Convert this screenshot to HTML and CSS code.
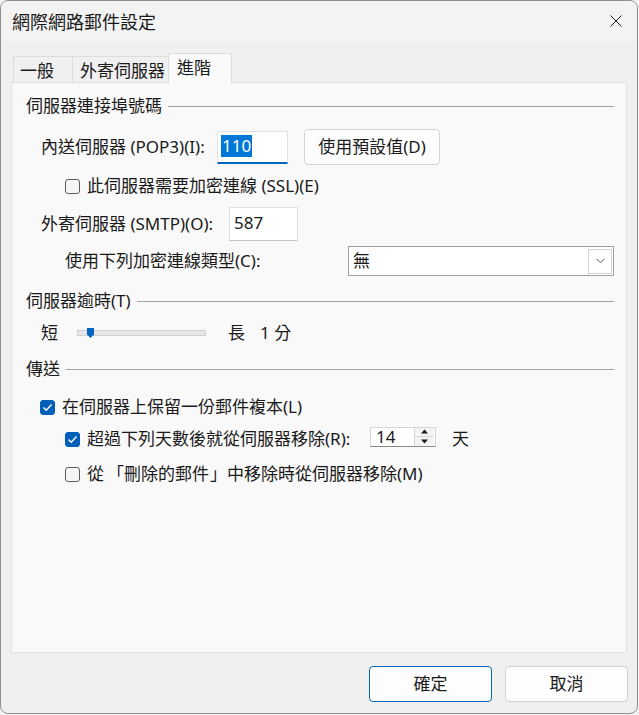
FILE: index.html
```html
<!DOCTYPE html>
<html lang="zh-Hant">
<head>
<meta charset="utf-8">
<title>網際網路郵件設定</title>
<link rel="stylesheet" href="styles.css">
</head>
<body>
<div class="window">
  <div class="titlebar">
    <span class="title">網際網路郵件設定</span>
    <span class="close" aria-label="關閉">
      <svg width="12" height="12" viewBox="0 0 12 12"><path d="M0.5 0.5 L11.5 11.5 M11.5 0.5 L0.5 11.5" stroke="#1a1a1a" stroke-width="1" fill="none"/></svg>
    </span>
  </div>
  <div class="content">
    <div class="tabs">
      <div class="tab tab-general">一般</div>
      <div class="tab tab-outgoing">外寄伺服器</div>
      <div class="tab tab-active">進階</div>
    </div>
    <div class="panel">
      <div class="group-header h-ports"><span>伺服器連接埠號碼</span><span class="rule"></span></div>

      <div class="row row-pop">
        <span class="label lbl-pop">內送伺服器 (POP3)(I):</span>
        <div class="textbox tb-pop"><span class="sel">110</span></div>
        <button class="btn btn-default">使用預設值(D)</button>
      </div>

      <div class="row row-ssl">
        <span class="checkbox"></span>
        <span class="check-label">此伺服器需要加密連線 (SSL)(E)</span>
      </div>

      <div class="row row-smtp">
        <span class="label lbl-smtp">外寄伺服器 (SMTP)(O):</span>
        <div class="textbox tb-smtp">587</div>
      </div>

      <div class="row row-enc">
        <span class="label lbl-enc">使用下列加密連線類型(C):</span>
        <div class="select">
          <span class="select-value">無</span>
          <span class="select-btn">
            <svg width="9" height="6" viewBox="0 0 9 6"><path d="M0.5 0.8 L4.5 4.8 L8.5 0.8" stroke="#5a5a5a" stroke-width="1" fill="none"/></svg>
          </span>
        </div>
      </div>

      <div class="group-header h-timeout"><span>伺服器逾時(T)</span><span class="rule"></span></div>

      <div class="row row-slider">
        <span class="slider-short">短</span>
        <div class="track">
          <svg class="thumb" width="7" height="10" viewBox="0 0 7 10"><path d="M0 0 H7 V6.5 L3.5 10 L0 6.5 Z" fill="#0067c0"/></svg>
        </div>
        <span class="slider-long">長</span>
        <span class="slider-value">1 分</span>
      </div>

      <div class="group-header h-send"><span>傳送</span><span class="rule"></span></div>

      <div class="row row-keep">
        <span class="checkbox checked"><svg width="11" height="9" viewBox="0 0 11 9"><path d="M1.5 4.6 L4.2 7.2 L9.6 1.6" stroke="#fff" stroke-width="1.4" fill="none"/></svg></span>
        <span class="check-label">在伺服器上保留一份郵件複本(L)</span>
      </div>

      <div class="row row-remove">
        <span class="checkbox checked"><svg width="11" height="9" viewBox="0 0 11 9"><path d="M1.5 4.6 L4.2 7.2 L9.6 1.6" stroke="#fff" stroke-width="1.4" fill="none"/></svg></span>
        <span class="check-label lbl-days">超過下列天數後就從伺服器移除(R):</span>
        <div class="spinner">
          <span class="spin-value">14</span>
          <span class="spin-btns">
            <span class="spin-btn"><svg width="7" height="5" viewBox="0 0 7 5"><path d="M3.5 0.5 L7 4.5 H0 Z" fill="#1a1a1a"/></svg></span>
            <span class="spin-btn"><svg width="7" height="5" viewBox="0 0 7 5"><path d="M0 0.5 H7 L3.5 4.5 Z" fill="#1a1a1a"/></svg></span>
          </span>
        </div>
        <span class="days-unit">天</span>
      </div>

      <div class="row row-deleted">
        <span class="checkbox"></span>
        <span class="check-label">從<span class="bracket-open">「</span>刪除的郵件<span class="bracket-close">」</span>中移除時從伺服器移除(M)</span>
      </div>
    </div>

    <div class="footer">
      <button class="btn btn-dialog btn-ok">確定</button>
      <button class="btn btn-dialog">取消</button>
    </div>
  </div>
</div>
</body>
</html>
```

FILE: styles.css
```css
* { box-sizing: border-box; }

html, body {
  margin: 0;
  padding: 0;
  background: #f3f3f3;
}

body {
  font-family: "Noto Sans", "Noto Sans CJK TC", sans-serif;
  font-size: 17px;
  color: #1a1a1a;
}

.window {
  width: 638px;
  height: 714px;
  border: 1px solid #8f8f8f;
  border-radius: 8px;
  background: #f0f0f0;
  overflow: hidden;
  display: flex;
  flex-direction: column;
}

.titlebar {
  height: 40px;
  flex: 0 0 40px;
  background: #f3f3f3;
  display: flex;
  align-items: center;
  justify-content: space-between;
  padding: 0 15px 0 11px;
}

.title {
  font-family: "Noto Sans CJK TC", sans-serif;
  font-size: 18px;
  line-height: 24px;
  color: #1a1a1a;
}

.close {
  display: flex;
  width: 12px;
  height: 12px;
}

.content {
  flex: 1;
  display: flex;
  flex-direction: column;
  padding: 12px 10px 0 10px;
}

/* Tabs */
.tabs {
  display: flex;
  align-items: flex-end;
  height: 29px;
  padding-left: 2px;
}

.tab {
  height: 26px;
  border: 1px solid #dcdcdc;
  border-bottom: none;
  background: #f0f0f0;
  display: flex;
  align-items: center;
  padding: 0 0 0 6px;
  line-height: 22px;
  white-space: nowrap;
  font-family: "Noto Sans CJK TC", sans-serif;
  font-size: 17px;
}

.tab-general { width: 60px; }
.tab-outgoing { width: 97px; margin-left: -1px; padding-left: 7px; }
.tab-active {
  width: 64px;
  margin-left: -1px;
  padding-left: 8px;
  height: 30px;
  margin-bottom: -1px;
  background: #f9f9f9;
  border-color: #dcdcdc;
  position: relative;
  z-index: 1;
  padding-bottom: 3px;
}

/* Panel */
.panel {
  height: 571px;
  flex: 0 0 571px;
  background: #f9f9f9;
  border: 1px solid #e0e0e0;
  padding: 11px 12px 0 14px;
  display: flex;
  flex-direction: column;
}

.group-header {
  display: flex;
  align-items: center;
  height: 24px;
  line-height: 24px;
  white-space: nowrap;
}

.group-header .rule {
  flex: 1;
  height: 1px;
  background: #a3a3a3;
  margin-left: 6px;
}

.h-timeout { margin-top: 13px; }
.h-send { margin-top: 14px; }

.row {
  display: flex;
  align-items: center;
  white-space: nowrap;
  line-height: 24px;
}

.row-pop { height: 36px; margin-top: 11px; padding-left: 15px; }
.row-ssl { height: 20px; margin-top: 11px; padding-left: 39px; }
.row-smtp { height: 34px; margin-top: 11px; padding-left: 15px; }
.row-enc { height: 30px; margin-top: 5px; padding-left: 39px; }
.row-slider { height: 20px; margin-top: 10px; padding-left: 15px; }
.row-keep { height: 20px; margin-top: 16px; padding-left: 14px; }
.row-remove { height: 20px; margin-top: 12px; padding-left: 39px; }
.row-deleted { height: 20px; margin-top: 15px; padding-left: 39px; }

.label { flex: 0 0 auto; }
.lbl-pop { width: 176px; }
.lbl-smtp { width: 188px; }
.lbl-enc { width: 283px; }

/* Text boxes */
.textbox {
  background: #ffffff;
  border: 1px solid #e1e1e1;
  border-bottom-color: #c4c4c4;
  display: flex;
  align-items: center;
}

.tb-pop {
  width: 71px;
  height: 33px;
  padding-left: 3px;
  border-bottom: 2px solid #0067c0;
}

.sel {
  background: #0078d7;
  color: #ffffff;
  height: 22px;
  line-height: 22px;
  padding: 0 1px;
  margin-top: -1px;
}

.tb-smtp {
  width: 69px;
  height: 34px;
  padding-left: 4px;
  padding-bottom: 3px;
}

.btn {
  font-family: "Noto Sans", "Noto Sans CJK TC", sans-serif;
  font-size: 17px;
  color: #1a1a1a;
  background: #fdfdfd;
  border: 1px solid #d4d4d4;
  border-radius: 4px;
  padding: 0;
  line-height: 24px;
}

.btn-default {
  width: 136px;
  height: 36px;
  margin-left: 16px;
}

/* Checkboxes */
.checkbox {
  flex: 0 0 15px;
  width: 15px;
  height: 15px;
  border: 1px solid #5c5c5c;
  border-radius: 3px;
  background: #f6f6f6;
  display: flex;
  align-items: center;
  justify-content: center;
}

.checkbox.checked {
  background: #005fb8;
  border-color: #005fb8;
}

.check-label { margin-left: 7px; }
.lbl-days { width: 283px; flex: 0 0 283px; }

.bracket-open { margin-left: 3px; }
.bracket-close { margin-left: 1px; }

/* Select */
.select {
  width: 267px;
  height: 30px;
  border: 1px solid #a0a0a0;
  background: #ffffff;
  display: flex;
  align-items: center;
  justify-content: space-between;
  padding: 0 1px 0 4px;
}

.select-btn {
  width: 24px;
  height: 25px;
  border: 1px solid #d3d3d3;
  display: flex;
  align-items: center;
  justify-content: center;
}

/* Slider */
.slider-short { width: 17px; }

.track {
  position: relative;
  width: 129px;
  height: 6px;
  margin-left: 19px;
  background: #e6e6e6;
  border: 1px solid #d0d0d0;
}

.thumb {
  position: absolute;
  left: 9px;
  top: -3px;
}

.slider-long { margin-left: 22px; }
.slider-value { margin-left: 15px; }

/* Spinner */
.spinner {
  width: 66px;
  height: 20px;
  margin-top: -5px;
  display: flex;
  border: 1px solid #d6d6d6;
  border-bottom-color: #8a8a8a;
  background: #ffffff;
}

.spin-value {
  flex: 1;
  padding-left: 5px;
  line-height: 18px;
}

.spin-btns {
  width: 20px;
  display: flex;
  flex-direction: column;
  border-left: 1px solid #d6d6d6;
  margin-right: 1px;
}

.spin-btn {
  flex: 1;
  display: flex;
  align-items: center;
  justify-content: center;
  border-bottom: 1px solid #d6d6d6;
  background: #f4f4f4;
}

.spin-btn:last-child { border-bottom: none; }

.days-unit { margin-left: 16px; }

/* Footer */
.footer {
  display: flex;
  justify-content: flex-end;
  gap: 13px;
  margin-top: 13px;
  margin-right: -1px;
}

.btn-dialog {
  width: 123px;
  height: 36px;
  border-color: #d0d0d0;
}

.btn-ok {
  border-color: #0067c0;
}
```
